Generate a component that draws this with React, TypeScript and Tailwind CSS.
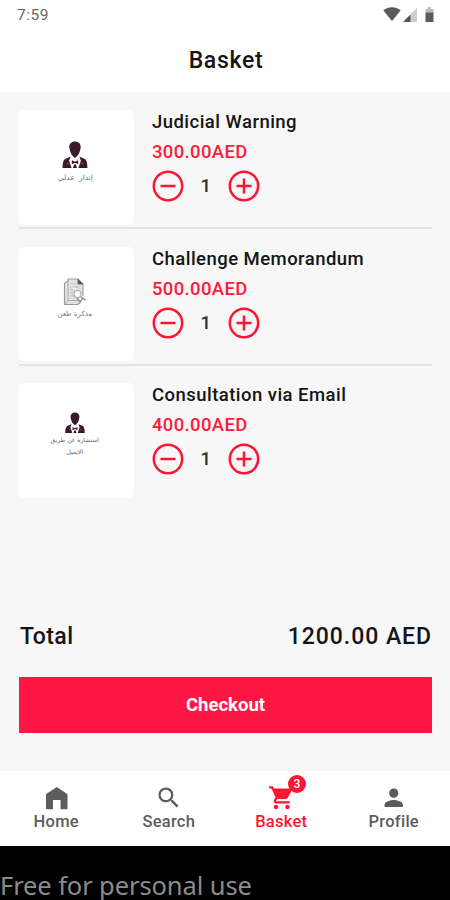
import { MdPerson, MdSearch, MdShoppingCart } from 'react-icons/md'

const items = [
  { title: 'Judicial Warning', price: '300.00AED', quantity: 1, art: <LawyerArt label="إنذار عدلي" /> },
  { title: 'Challenge Memorandum', price: '500.00AED', quantity: 1, art: <MemoArt /> },
  { title: 'Consultation via Email', price: '400.00AED', quantity: 1, art: <EmailArt /> },
]

function HomeIcon() {
  return (
    <svg viewBox="0 0 24 24" fill="currentColor" className="size-[27.5px]">
      <path d="M12 2.6 2.9 8.8q-.3.2-.3.7v11.8c0 .5.3.8.8.8h5.300v-8.100h6.600v8.100h5.300c.5 0 .8-.3.8-.8V9.500q0-.5-.3-.7z" />
    </svg>
  )
}

const tabs = [
  { name: 'Home', icon: <HomeIcon /> },
  { name: 'Search', icon: <MdSearch className="size-[27.5px]" /> },
  { name: 'Basket', icon: <MdShoppingCart className="size-[27.5px]" />, active: true, badge: 3 },
  { name: 'Profile', icon: <MdPerson className="size-[27.5px]" /> },
]

function Lawyer({ className }: { className: string }) {
  return (
    <svg viewBox="0 0 26 28" fill="#3b1a2c" className={className}>
      <path d="M13 .5c-3.600 0-5.800 2.300-5.800 5.600 0 1 .1 1.700.4 2.300C8 12 10 15.500 13 17.200c3-1.700 5-5.200 5.400-8.800.3-.6.400-1.300.4-2.300C18.800 2.800 16.600.5 13 .5z" />
      <path d="M8.600 15.800 3.500 18C1.300 19 .5 21.500.3 27.500h9.200L7 20zM17.400 15.800l5.100 2.200c2.200 1 3 3.500 3.200 9.500h-9.200L19 20z" />
      <path d="m9.800 19.500 3.200 1.700 3.200-1.700v4.200L13 22.200l-3.200 1.500zM12 24h2l1 3.500h-4z" />
      <path d="m5 22.500 1.800 1M21 22.500l-1.800 1" stroke="#a58b99" strokeWidth=".8" />
    </svg>
  )
}

function LawyerArt({ label }: { label: string }) {
  return (
    <div className="flex flex-col items-center pt-[31px] pr-[2px]">
      <Lawyer className="h-[27.5px] w-[26px]" />
      <span
        dir="rtl"
        className="mt-[2px] font-['DejaVu_Sans',sans-serif] text-[7.5px] leading-[14px] whitespace-pre text-[#777] [word-spacing:2px]"
      >
        {label}
      </span>
    </div>
  )
}

function MemoArt() {
  return (
    <div className="flex flex-col items-center pt-[31px] pr-[3px]">
      <svg viewBox="0 0 24 28" fill="none" className="h-7 w-6">
        <path d="M5 3V1h10l5 5v12M5 3 1.500 5.500v21H15l3-3" fill="#e4e2e3" stroke="#999" strokeWidth="1.1" />
        <path d="M5 3v19.500h10M5 22.500l-3.500 4" stroke="#aaa" />
        <path d="M15 1v5h5" fill="#555" stroke="#666" />
        <path d="M7 6h6M7 9h9M7 12h5M7 15h3M7 18h4" stroke="#bbb" />
        <circle cx="14.5" cy="16" r="3.7" fill="#fff" stroke="#999" />
        <path d="m17.500 18.500 5 3.500M14 20l3 4 3-4" stroke="#888" strokeWidth="1.3" />
      </svg>
      <span
        dir="rtl"
        className="mt-px font-['DejaVu_Sans',sans-serif] text-[7px] leading-[14px] whitespace-pre text-[#777]"
      >
        مذكرة طعن
      </span>
    </div>
  )
}

function EmailArt() {
  return (
    <div className="flex flex-col items-center pt-[29px] pr-[3px]">
      <Lawyer className="h-[21.5px] w-[20px]" />
      <span
        dir="rtl"
        className="text-center font-['DejaVu_Sans',sans-serif] text-[6px] leading-[12px] text-[#666]"
      >
        استشارة عن طريق
        <br />
        الايميل
      </span>
    </div>
  )
}

function RoundButton({ plus = false }: { plus?: boolean }) {
  return (
    <button aria-label={plus ? 'Increase' : 'Decrease'} className="size-8">
      <svg viewBox="0 0 32 32" fill="none" stroke="#fb1633" strokeWidth="2.5" className="size-8">
        <circle cx="16" cy="16" r="14.2" />
        <path d={plus ? 'M8.5 16h15M16 8.5v15' : 'M8.5 16h15'} />
      </svg>
    </button>
  )
}

function StatusBar() {
  return (
    <div className="flex h-[30px] items-center justify-between pr-[16px] pl-[17px]">
      <span className="text-[15.5px] leading-[30px] font-normal tracking-[0.5px] text-[#666]">7:59</span>
      <div className="flex h-4 items-start">
        <svg viewBox="0 0 18 16" className="h-4 w-[18px]">
          <path d="M.3 3.200C5.500-.9 12.500-.9 17.700 3.200L9 14z" fill="#595959" />
        </svg>
        <svg viewBox="0 0 14 16" className="ml-[2.5px] h-4 w-3.5">
          <path d="M14 1v14H0z" fill="#cecece" />
          <path d="M7.500 7.500V15H0z" fill="#555" />
        </svg>
        <svg viewBox="0 0 9 16" className="ml-2 h-4 w-[9px]">
          <path d="M3 0h3v2h2.500v4h-8V2H3z" fill="#bdbdbd" />
          <path d="M.5 5.500h8V15h-8z" fill="#5c5c5c" />
        </svg>
      </div>
    </div>
  )
}

export default function App() {
  return (
    <div className="flex h-[900px] w-[450px] flex-col overflow-hidden bg-[#f7f7f7] font-[Roboto,sans-serif] font-medium text-[#151515]">
      <header className="h-[92px] shrink-0 bg-white">
        <StatusBar />
        <h1 className="pt-px pl-[2px] text-center text-[23px] leading-[60px] tracking-[0.7px]">Basket</h1>
      </header>

      <main className="flex grow flex-col pt-[18px] pr-[18px] pl-[19px]">
        {items.map((item, i) => (
          <section
            key={item.title}
            className={`flex gap-[18.5px] ${i < items.length - 1 ? 'mb-[17.7px] h-[119px] border-b-2 border-[#e2e2e2]' : 'h-[115px]'}`}
          >
            <div className="h-[114.5px] w-[114.5px] shrink-0 rounded-[5px] bg-white">{item.art}</div>
            <div>
              <h2 className="pt-px text-[18.5px] leading-[22px] tracking-[0.46px]">{item.title}</h2>
              <p className="mt-[8px] text-[18.5px] leading-[22px] tracking-[0.35px] text-[#fb1c3c]">{item.price}</p>
              <div className="mt-[7px] flex items-center">
                <RoundButton />
                <span className="w-[43.5px] text-center text-[18.5px] leading-8 text-[#303030]">{item.quantity}</span>
                <RoundButton plus />
              </div>
            </div>
          </section>
        ))}

        <div className="mt-auto flex justify-between pl-px text-[23px] leading-[30px]">
          <span className="tracking-[0.4px]">Total</span>
          <span className="tracking-[0.95px]">1200.00 AED</span>
        </div>
        <button className="mt-[25px] mb-[38px] h-[56px] shrink-0 bg-[#ff1744] pt-px text-[18.5px] font-bold text-white">
          Checkout
        </button>
      </main>

      <nav className="grid h-[75px] shrink-0 grid-cols-4 bg-white">
        {tabs.map((tab) => (
          <div
            key={tab.name}
            className={`flex flex-col items-center pt-[12.5px] ${tab.active ? 'text-[#fb1633]' : 'text-[#5c5c5c]'}`}
          >
            <div className="relative">
              {tab.icon}
              {tab.badge && (
                <span className="absolute -top-[9px] left-[20.5px] flex size-[18px] items-center justify-center rounded-full bg-[#fb1633] text-[12px] leading-none text-white">
                  {tab.badge}
                </span>
              )}
            </div>
            <span className="pt-px text-[16.5px] leading-5 tracking-[0.25px]">{tab.name}</span>
          </div>
        ))}
      </nav>

      <footer className="h-[54px] shrink-0 overflow-hidden bg-black pt-[25px]">
        <p className="font-['Noto_Sans',sans-serif] text-[25.5px] leading-[29px] font-normal tracking-[-0.1px] whitespace-nowrap text-[#8c8c8c]">
          Free for personal use
        </p>
      </footer>
    </div>
  )
}
